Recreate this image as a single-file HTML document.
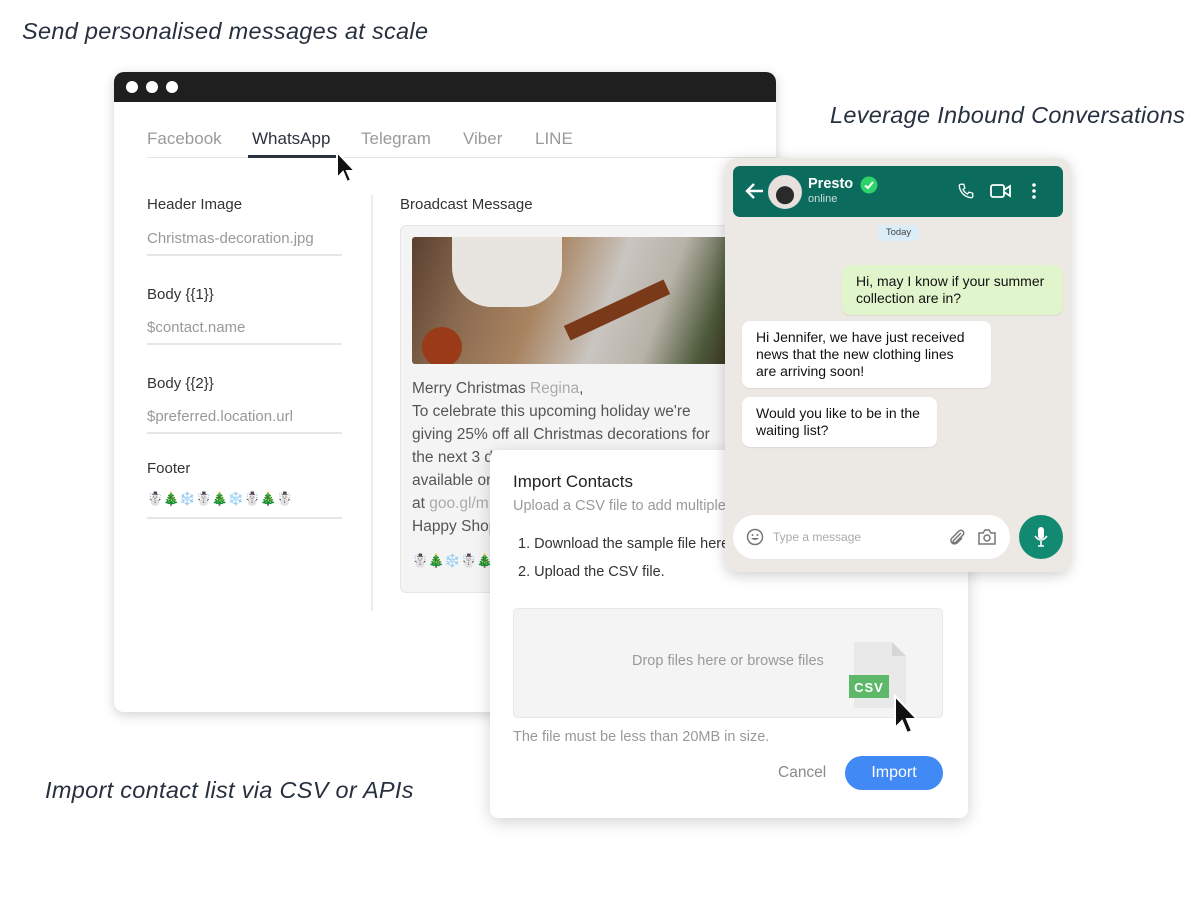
<!DOCTYPE html>
<html><head><meta charset="utf-8">
<style>
*{margin:0;padding:0;box-sizing:border-box}
body{width:1196px;height:901px;background:#fff;position:relative;overflow:hidden;font-family:"Liberation Sans","DejaVu Sans",sans-serif}
.a{position:absolute;white-space:nowrap}
.hand{font-family:"Liberation Sans",sans-serif;font-style:italic;color:#26303f;font-size:23.5px;letter-spacing:0.3px}
.lbl{font-size:15px;color:#333}
.val{font-size:15px;color:#999}
.ln{position:absolute;height:2px;background:#e6e6e6;width:195px;left:147px}
.tab{font-size:17px;color:#9a9a9a;top:129px}
.msg{font-size:15.5px;color:#555;line-height:23px}
.bub{position:absolute;background:#fff;border-radius:8px;font-size:14px;color:#111;line-height:17px;padding:8px 14px;box-shadow:0 1px 1px rgba(0,0,0,.08)}
</style></head><body>

<div class="a hand" style="left:22px;top:18px">Send personalised messages at scale</div>
<div class="a hand" style="left:830px;top:102px">Leverage Inbound Conversations</div>
<div class="a hand" style="left:45px;top:777px">Import contact list via CSV or APIs</div>

<!-- browser -->
<div class="a" style="left:114px;top:72px;width:662px;height:640px;background:#fff;border-radius:10px;box-shadow:0 3px 12px rgba(0,0,0,.18);overflow:hidden">
  <div style="height:30px;background:#1f1f1f"></div>
</div>
<div class="a" style="left:126px;top:81px;width:12px;height:12px;border-radius:50%;background:#fff"></div>
<div class="a" style="left:146px;top:81px;width:12px;height:12px;border-radius:50%;background:#fff"></div>
<div class="a" style="left:166px;top:81px;width:12px;height:12px;border-radius:50%;background:#fff"></div>

<div class="a tab" style="left:147px">Facebook</div>
<div class="a tab" style="left:252px;color:#2b3340">WhatsApp</div>
<div class="a tab" style="left:361px">Telegram</div>
<div class="a tab" style="left:463px">Viber</div>
<div class="a tab" style="left:535px">LINE</div>
<div class="a" style="left:147px;top:157px;width:629px;height:1px;background:#e3e3e3"></div>
<div class="a" style="left:248px;top:155px;width:88px;height:3px;background:#2b3340"></div>
<svg class="a" style="left:334px;top:150px" width="26" height="38" viewBox="0 0 26 38"><path d="M3 2 L3 28 L9 22 L13 32 L17 30 L13 21 L21 21 Z" fill="#111" stroke="#fff" stroke-width="2"/></svg>

<div class="a lbl" style="left:147px;top:196px">Header Image</div>
<div class="a val" style="left:147px;top:230px">Christmas-decoration.jpg</div>
<div class="ln" style="top:254px"></div>
<div class="a lbl" style="left:147px;top:286px">Body {{1}}</div>
<div class="a val" style="left:147px;top:319px">$contact.name</div>
<div class="ln" style="top:343px"></div>
<div class="a lbl" style="left:147px;top:375px">Body {{2}}</div>
<div class="a val" style="left:147px;top:408px">$preferred.location.url</div>
<div class="ln" style="top:432px"></div>
<div class="a lbl" style="left:147px;top:460px">Footer</div>
<div class="a" style="left:147px;top:491px;font-size:13px">☃️🎄❄️☃️🎄❄️☃️🎄☃️</div>
<div class="ln" style="top:517px"></div>
<div class="a" style="left:371px;top:195px;width:2px;height:416px;background:#ececec"></div>

<div class="a lbl" style="left:400px;top:196px">Broadcast Message</div>
<div class="a" style="left:400px;top:225px;width:340px;height:368px;background:#f4f4f4;border:1px solid #e6e6e6;border-radius:6px"></div>
<div class="a" style="left:412px;top:237px;width:320px;height:127px;border-radius:3px;overflow:hidden;background:linear-gradient(110deg,#5a4030 0%,#8a6a50 20%,#a88360 40%,#c9c5c0 60%,#b8b2a8 75%,#4c5a3a 90%,#3a3020 100%)">
  <div style="position:absolute;left:40px;top:-10px;width:110px;height:80px;border-radius:0 0 40px 40px;background:#e8e4df"></div>
  <div style="position:absolute;left:10px;top:90px;width:40px;height:40px;border-radius:50%;background:#9a3a18"></div>
  <div style="position:absolute;left:150px;top:65px;width:110px;height:16px;transform:rotate(-25deg);background:#7a3a1a"></div>
</div>
<div class="a msg" style="left:412px;top:377px">Merry Christmas <span style="color:#aaa">Regina</span>,<br>To celebrate this upcoming holiday we're<br>giving 25% off all Christmas decorations for<br>the next 3 days<br>available on<br>at <span style="color:#aaa">goo.gl/m</span><br>Happy Shopping</div>
<div class="a" style="left:412px;top:553px;font-size:13px">☃️🎄❄️☃️🎄</div>

<!-- import dialog -->
<div class="a" style="left:490px;top:450px;width:478px;height:368px;background:#fff;border-radius:8px;box-shadow:0 4px 16px rgba(0,0,0,.18)"></div>
<div class="a" style="left:513px;top:472px;font-size:17px;color:#222">Import Contacts</div>
<div class="a" style="left:513px;top:498px;font-size:14.5px;color:#9a9a9a">Upload a CSV file to add multiple contacts</div>
<div class="a" style="left:518px;top:536px;font-size:14.5px;color:#333">1. Download the sample file here</div>
<div class="a" style="left:518px;top:564px;font-size:14.5px;color:#333">2. Upload the CSV file.</div>
<div class="a" style="left:513px;top:608px;width:430px;height:110px;background:#f4f4f4;border:1px solid #e8e8e8;border-radius:5px"></div>
<div class="a" style="left:632px;top:653px;font-size:14.5px;color:#999">Drop files here or browse files</div>
<svg class="a" style="left:846px;top:638px" width="70" height="96" viewBox="0 0 70 96">
  <path d="M8 4 H46 L60 18 V70 H8 Z" fill="#e9e9e9"/><path d="M46 4 V18 H60 Z" fill="#d6d6d6"/>
  <rect x="3" y="37" width="40" height="23" fill="#5db86a"/>
  <text x="23" y="54" font-family="Liberation Sans" font-weight="bold" font-size="13" fill="#fff" text-anchor="middle" letter-spacing="1">CSV</text>
  <path d="M49 58 L49 90 L56 83 L61 95 L66 93 L61 81 L71 81 Z" fill="#111" stroke="#fff" stroke-width="2"/>
</svg>
<div class="a" style="left:513px;top:729px;font-size:14.5px;color:#999">The file must be less than 20MB in size.</div>
<div class="a" style="left:778px;top:764px;font-size:15.5px;color:#8a8a8a">Cancel</div>
<div class="a" style="left:845px;top:756px;width:98px;height:34px;border-radius:17px;background:#4189f5;color:#fff;font-size:16px;text-align:center;line-height:34px">Import</div>

<!-- whatsapp -->
<div class="a" style="left:725px;top:158px;width:345px;height:414px;background:#ece9e4;border-radius:12px;box-shadow:0 3px 14px rgba(0,0,0,.2)"></div>
<div class="a" style="left:733px;top:166px;width:330px;height:51px;background:#0b6b5c;border-radius:7px"></div>
<svg class="a" style="left:745px;top:182px" width="20" height="18" viewBox="0 0 20 18"><path d="M18 9 H3 M9 2 L2 9 L9 16" stroke="#fff" stroke-width="2.4" fill="none"/></svg>
<div class="a" style="left:768px;top:175px;width:34px;height:34px;border-radius:50%;background:radial-gradient(circle at 50% 60%,#2a2a2a 35%,#e8e0dc 37%);border:1px solid #ddd"></div>
<div class="a" style="left:808px;top:176px;font-size:14.5px;color:#fff;font-weight:bold">Presto</div>
<div class="a" style="left:808px;top:193px;font-size:11px;color:#c8e0da">online</div>
<svg class="a" style="left:860px;top:176px" width="18" height="18" viewBox="0 0 18 18"><circle cx="9" cy="9" r="8.5" fill="#2ed26b"/><path d="M5 9.5 L8 12 L13 6" stroke="#fff" stroke-width="2" fill="none"/></svg>
<svg class="a" style="left:957px;top:182px" width="18" height="18" viewBox="0 0 24 24"><path d="M5 3 L9 3 L10.5 8 L8 10 C9.5 13 11 14.5 14 16 L16 13.5 L21 15 L21 19 C21 20 20 21 19 21 C10 20 4 14 3 5 C3 4 4 3 5 3Z" stroke="#fff" stroke-width="1.8" fill="none"/></svg>
<svg class="a" style="left:990px;top:182px" width="22" height="18" viewBox="0 0 22 18"><rect x="1" y="3" width="13" height="12" rx="2" stroke="#fff" stroke-width="1.8" fill="none"/><path d="M14 8 L20 4 V14 L14 10" stroke="#fff" stroke-width="1.8" fill="none"/></svg>
<svg class="a" style="left:1030px;top:182px" width="8" height="18" viewBox="0 0 8 18"><circle cx="4" cy="3" r="1.8" fill="#fff"/><circle cx="4" cy="9" r="1.8" fill="#fff"/><circle cx="4" cy="15" r="1.8" fill="#fff"/></svg>
<div class="a" style="left:878px;top:225px;width:41px;height:16px;background:#dcedf8;border-radius:4px;font-size:9.5px;color:#444;text-align:center;line-height:16px">Today</div>
<div class="bub" style="left:842px;top:265px;width:221px;background:#e1f5cd">Hi, may I know if your summer<br>collection are in?</div>
<div class="bub" style="left:742px;top:321px;width:249px">Hi Jennifer, we have just received<br>news that the new clothing lines<br>are arriving soon!</div>
<div class="bub" style="left:742px;top:397px;width:195px">Would you like to be in the<br>waiting list?</div>
<div class="a" style="left:733px;top:515px;width:277px;height:44px;background:#fff;border-radius:22px"></div>
<svg class="a" style="left:746px;top:528px" width="18" height="18" viewBox="0 0 18 18"><circle cx="9" cy="9" r="7.5" stroke="#777" stroke-width="1.5" fill="none"/><path d="M5 10 Q9 14 13 10Z" fill="#777"/><circle cx="6.5" cy="7" r="1" fill="#777"/><circle cx="11.5" cy="7" r="1" fill="#777"/></svg>
<div class="a" style="left:773px;top:530px;font-size:12px;color:#aaa">Type a message</div>
<svg class="a" style="left:948px;top:527px" width="18" height="20" viewBox="0 0 18 20"><path d="M13 6 L6 13 C4 15 6 17 8 15 L15 8 C17 5 14 2 11 4 L4 11 C1 14 5 19 9 16 L14 11" stroke="#777" stroke-width="1.5" fill="none"/></svg>
<svg class="a" style="left:977px;top:528px" width="20" height="18" viewBox="0 0 20 18"><path d="M2 5 H6 L8 2 H12 L14 5 H18 V16 H2 Z" stroke="#777" stroke-width="1.5" fill="none"/><circle cx="10" cy="10" r="3" stroke="#777" stroke-width="1.5" fill="none"/></svg>
<div class="a" style="left:1019px;top:515px;width:44px;height:44px;border-radius:50%;background:#128a72"></div>
<svg class="a" style="left:1032px;top:526px" width="18" height="22" viewBox="0 0 18 22"><rect x="6" y="1" width="6" height="12" rx="3" fill="#fff"/><path d="M3 10 Q9 18 15 10 M9 15 V20 M6 20 H12" stroke="#fff" stroke-width="1.6" fill="none"/></svg>

</body></html>
